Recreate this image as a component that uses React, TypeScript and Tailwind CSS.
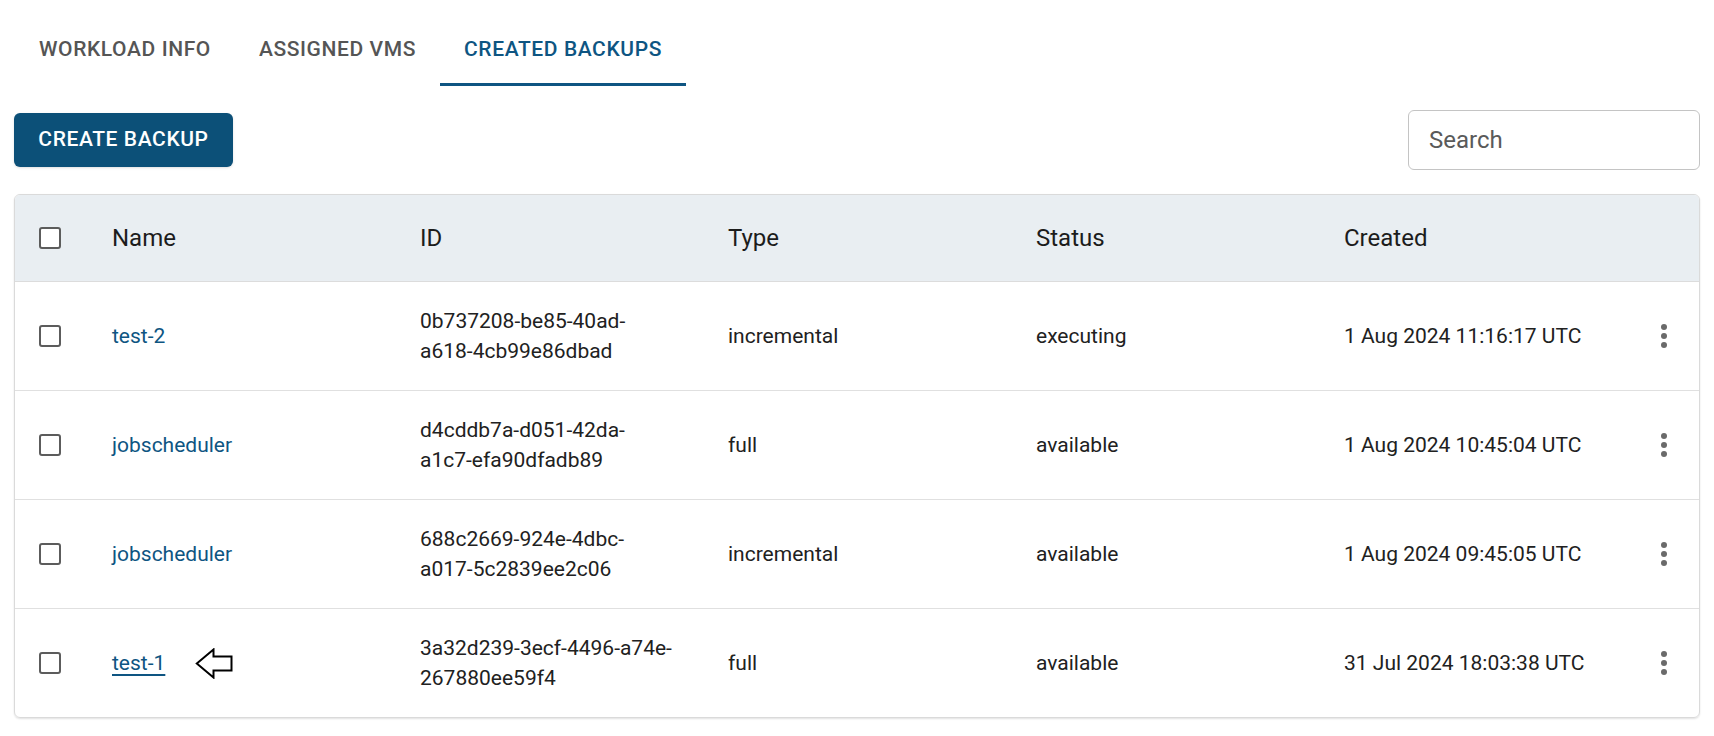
import React from "react";

type Row = {
  name: string;
  id: [string, string];
  type: string;
  status: string;
  created: string;
  underline?: boolean;
  arrow?: boolean;
};

const rows: Row[] = [
  {
    name: "test-2",
    id: ["0b737208-be85-40ad-", "a618-4cb99e86dbad"],
    type: "incremental",
    status: "executing",
    created: "1 Aug 2024 11:16:17 UTC",
  },
  {
    name: "jobscheduler",
    id: ["d4cddb7a-d051-42da-", "a1c7-efa90dfadb89"],
    type: "full",
    status: "available",
    created: "1 Aug 2024 10:45:04 UTC",
  },
  {
    name: "jobscheduler",
    id: ["688c2669-924e-4dbc-", "a017-5c2839ee2c06"],
    type: "incremental",
    status: "available",
    created: "1 Aug 2024 09:45:05 UTC",
  },
  {
    name: "test-1",
    id: ["3a32d239-3ecf-4496-a74e-", "267880ee59f4"],
    type: "full",
    status: "available",
    created: "31 Jul 2024 18:03:38 UTC",
    underline: true,
    arrow: true,
  },
];

function Checkbox() {
  return <div className="w-[22px] h-[22px] border-[2.5px] border-[#5c5c5c] rounded-[3px] bg-white" />;
}

function Kebab() {
  return (
    <div className="flex flex-col items-center gap-[3px]">
      <span className="w-[6px] h-[6px] rounded-full bg-[#6a6a6a]" />
      <span className="w-[6px] h-[6px] rounded-full bg-[#6a6a6a]" />
      <span className="w-[6px] h-[6px] rounded-full bg-[#6a6a6a]" />
    </div>
  );
}

function Arrow() {
  return (
    <svg width="38" height="31" viewBox="0 0 38 31" className="block">
      <polygon
        points="1.8,15.5 18.5,1.5 18.5,8.5 36.5,8.5 36.5,22.5 18.5,22.5 18.5,29.5"
        fill="white"
        stroke="black"
        strokeWidth="2"
        strokeLinejoin="miter"
      />
    </svg>
  );
}

export default function App() {
  const tabs = [
    { label: "Workload Info", active: false },
    { label: "Assigned VMs", active: false },
    { label: "Created Backups", active: true },
  ];
  return (
    <div className="w-[1714px] h-[736px] bg-white font-['Roboto','Liberation_Sans',sans-serif] text-[#212121] overflow-hidden">
      {/* Tabs */}
      <div className="flex pl-[15px] pt-[14px]">
        {tabs.map((t) => (
          <div
            key={t.label}
            className={
              t.active
                ? "h-[72px] px-[24px] flex items-center border-b-[3px] border-[#0e5582] text-[#0e5582] text-[21px] font-medium uppercase tracking-[0.6px]"
                : "h-[72px] px-[24px] flex items-center border-b-[3px] border-transparent text-[#555555] text-[21px] font-medium uppercase tracking-[0.6px]"
            }
          >
            <span className="pt-[3px]">{t.label}</span>
          </div>
        ))}
      </div>

      {/* Toolbar */}
      <div className="flex items-center justify-between px-[14px] mt-[24px] h-[60px]">
        <button className="w-[219px] h-[54px] rounded-[6px] bg-[#0c5078] text-white text-[21px] font-medium uppercase tracking-[0.6px] shadow-sm">
          Create Backup
        </button>
        <input
          placeholder="Search"
          className="w-[292px] h-[60px] rounded-[6px] border border-[#c4c4c4] px-[20px] text-[24px] text-[#212121] placeholder:text-[#5a5a5a] placeholder:opacity-100 outline-none font-['Roboto','Liberation_Sans',sans-serif]"
        />
      </div>

      {/* Table */}
      <div className="mx-[14px] mt-[24px] border border-[#dadada] rounded-[6px] overflow-hidden shadow-[0_1px_2px_rgba(0,0,0,0.12)]">
        <div className="grid grid-cols-[73px_308px_308px_308px_308px_308px_1fr] h-[87px] bg-[#e9eef2] border-b border-[#dcdcdc] items-center text-[24px] text-[#1c1c1c]">
          <div className="pl-[24px] flex items-center">
            <Checkbox />
          </div>
          <div className="px-[24px]">Name</div>
          <div className="px-[24px]">ID</div>
          <div className="px-[24px]">Type</div>
          <div className="px-[24px]">Status</div>
          <div className="px-[24px]">Created</div>
          <div />
        </div>
        {rows.map((r, i) => (
          <div
            key={i}
            className={
              i < rows.length - 1
                ? "grid grid-cols-[73px_308px_308px_308px_308px_308px_1fr] h-[109px] border-b border-[#e0e0e0] items-center text-[21px] leading-[30px]"
                : "grid grid-cols-[73px_308px_308px_308px_308px_308px_1fr] h-[108px] items-center text-[21px] leading-[30px]"
            }
          >
            <div className="pl-[24px] flex items-center">
              <Checkbox />
            </div>
            <div className="px-[24px] flex items-center gap-[30px]">
              <span className={r.underline ? "text-[#0e5582] underline underline-offset-[4px] decoration-[1.5px]" : "text-[#0e5582]"}>
                {r.name}
              </span>
              {r.arrow && <Arrow />}
            </div>
            <div className="px-[24px] whitespace-nowrap">
              <div>{r.id[0]}</div>
              <div>{r.id[1]}</div>
            </div>
            <div className="px-[24px]">{r.type}</div>
            <div className="px-[24px]">{r.status}</div>
            <div className="px-[24px] whitespace-nowrap">{r.created}</div>
            <div className="flex justify-center">
              <Kebab />
            </div>
          </div>
        ))}
      </div>
    </div>
  );
}
